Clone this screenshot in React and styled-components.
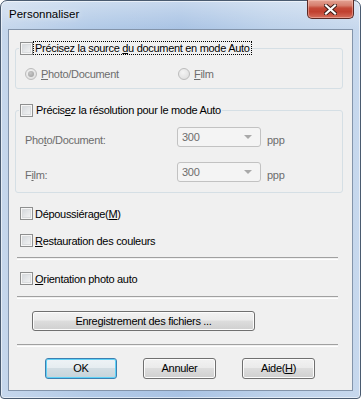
import styled, { createGlobalStyle } from "styled-components";

const GlobalStyle = createGlobalStyle`
  html, body {
    margin: 0;
    padding: 0;
    background: #ffffff;
  }
  body {
    font-family: "Liberation Sans", Arial, sans-serif;
    font-size: 11px;
    letter-spacing: -0.3px;
    color: #000;
  }
`;

const Window = styled.div`
  width: 361px;
  height: 399px;
  box-sizing: border-box;
  display: flex;
  flex-direction: column;
  padding: 0 7px 7px 7px;
  border: 1px solid #4a5b70;
  border-radius: 7px 7px 4px 4px;
  background:
    linear-gradient(180deg, rgba(255, 255, 255, 0.35) 0, rgba(255, 255, 255, 0) 28px),
    linear-gradient(90deg, #c6d7ec 0%, #b2cae7 25%, #a9c3e4 50%, #bcd1ea 75%, #c7d8ed 100%);
  box-shadow: inset 0 0 0 1px rgba(255, 255, 255, 0.55);
`;

const TitleBar = styled.div`
  height: 28px;
  display: flex;
  justify-content: space-between;
  align-items: flex-start;
  margin-right: -1px;
`;

const Title = styled.span`
  font-family: "Liberation Sans", Arial, sans-serif;
  font-size: 11.5px;
  letter-spacing: 0;
  line-height: 14px;
  padding-top: 6px;
  padding-left: 1px;
  color: #000;
  text-shadow: 0 0 6px rgba(255, 255, 255, 0.9);
`;

const CloseButton = styled.div`
  width: 47px;
  height: 19px;
  box-sizing: border-box;
  margin-top: -1px;
  border: 1px solid #5b2a25;
  border-top: none;
  border-radius: 0 0 5px 5px;
  background: linear-gradient(
    180deg,
    #e3a293 0%,
    #d7806f 30%,
    #c44a38 45%,
    #c1402f 65%,
    #d46e5c 100%
  );
  box-shadow: inset 0 0 0 1px rgba(255, 210, 200, 0.45);
  display: flex;
  align-items: center;
  justify-content: center;
`;

const Client = styled.div`
  flex: 1;
  display: flex;
  flex-direction: column;
  background: #f0f0f0;
  border: 1px solid #8394aa;
  padding: 11px 9px 0 6px;
`;

const Group = styled.fieldset`
  margin: ${(p) => p.$top || 0}px 0 0 0;
  padding: 0 0 ${(p) => p.$bottom}px 0;
  min-width: 0;
  border: 1px solid #d5dfe5;
  border-radius: 3px;
`;

const Legend = styled.legend`
  margin-left: 3px;
  padding: 0 1px;
  height: 14px;
`;

const LegendInner = styled.span`
  display: flex;
  align-items: center;
  gap: 1px;
  height: 14px;
`;

const Box = styled.span`
  display: inline-block;
  flex: none;
  width: 13px;
  height: 13px;
  box-sizing: border-box;
  border: 1px solid #8e8f8f;
  background: linear-gradient(135deg, #cfd3d8 0%, #e4e6e8 50%, #f7f7f7 100%);
  box-shadow: inset 0 0 0 1px #f6f6f6, inset 0 0 0 2px #dadcde;
`;

const FocusLabel = styled.span`
  line-height: 12px;
  padding: 0 1px;
  outline: 1px dotted #000;
  outline-offset: 0;
`;

const PlainLabel = styled.span`
  padding-left: 2px;
`;

const Radios = styled.div`
  margin: 12px 0 0 9px;
  display: grid;
  grid-template-columns: 153px auto;
  height: 13px;
`;

const RadioItem = styled.div`
  display: flex;
  align-items: center;
  gap: 4px;
  color: #6d6d6d;
`;

const Radio = styled.span`
  flex: none;
  width: 12px;
  height: 12px;
  box-sizing: border-box;
  border-radius: 50%;
  border: 1px solid #bcbcbc;
  background: radial-gradient(circle at 40% 35%, #f4f4f4 0%, #e2e2e2 70%, #d4d4d4 100%);
  display: flex;
  align-items: center;
  justify-content: center;

  &::after {
    content: "";
    display: ${(p) => (p.$checked ? "block" : "none")};
    width: 6px;
    height: 6px;
    border-radius: 50%;
    background: radial-gradient(circle at 40% 35%, #c8c8c8 0%, #9a9a9a 100%);
  }
`;

const FieldRow = styled.div`
  display: flex;
  align-items: center;
  height: 20px;
  margin: ${(p) => p.$top}px 0 0 9px;
  color: #6d6d6d;
`;

const FieldLabel = styled.span`
  width: 152px;
  flex: none;
  padding-top: 6px;
`;

const Combo = styled.div`
  width: 84px;
  height: 20px;
  box-sizing: border-box;
  border: 1px solid #c2c2c2;
  border-radius: 3px;
  background: #f4f4f4;
  display: flex;
  align-items: center;
  justify-content: space-between;
  padding: 0 8px 0 4px;
  color: #6d6d6d;
`;

const Arrow = styled.span`
  width: 0;
  height: 0;
  border-left: 4px solid transparent;
  border-right: 4px solid transparent;
  border-top: 4px solid #a9a9a9;
`;

const Unit = styled.span`
  margin-left: 6px;
  padding-top: 6px;
`;

const CheckRow = styled.div`
  display: flex;
  align-items: center;
  gap: 2px;
  height: 13px;
  margin: ${(p) => p.$top}px 0 0 5px;
`;

const Separator = styled.div`
  height: 1px;
  margin: ${(p) => p.$top}px 5px 0 2px;
  border-top: 1px solid #a0a0a0;
  border-bottom: 1px solid #ffffff;
`;

const Button = styled.div`
  width: ${(p) => p.$w}px;
  height: ${(p) => p.$h}px;
  box-sizing: border-box;
  border: 1px solid ${(p) => (p.$default ? "#3c7fb1" : "#707070")};
  border-radius: 3px;
  background: ${(p) =>
    p.$default
      ? "linear-gradient(180deg, #eef3f6 0%, #e6edf1 45%, #d2dde3 50%, #c6d3da 100%)"
      : "linear-gradient(180deg, #f2f2f2 0%, #ebebeb 45%, #dddddd 50%, #cfcfcf 100%)"};
  box-shadow: inset 0 0 0 1px ${(p) => (p.$default ? "#5fd2f7" : "#fcfcfc")};
  display: flex;
  align-items: center;
  justify-content: center;
  line-height: 13px;
`;

const SaveRow = styled.div`
  margin: 12px 0 0 17px;
`;

const ButtonRow = styled.div`
  display: flex;
  gap: 26px;
  margin: 11px 0 0 30px;
`;

const CloseIcon = () => (
  <svg width="13" height="11" viewBox="0 0 13 11">
    <path d="M2 1.5 L11 9.5 M11 1.5 L2 9.5" stroke="#3a1a16" strokeWidth="4" strokeLinecap="square" />
    <path d="M2 1.5 L11 9.5 M11 1.5 L2 9.5" stroke="#ffffff" strokeWidth="2.2" strokeLinecap="square" />
  </svg>
);

export default function App() {
  return (
    <>
      <GlobalStyle />
      <Window>
        <TitleBar>
          <Title>Personnaliser</Title>
          <CloseButton>
            <CloseIcon />
          </CloseButton>
        </TitleBar>
        <Client>
          <Group $bottom={8}>
            <Legend>
              <LegendInner>
                <Box />
                <FocusLabel>
                  Précisez la source <u>d</u>u document en mode Auto
                </FocusLabel>
              </LegendInner>
            </Legend>
            <Radios>
              <RadioItem>
                <Radio $checked />
                <span>
                  <u>P</u>hoto/Document
                </span>
              </RadioItem>
              <RadioItem>
                <Radio />
                <span>
                  <u>F</u>ilm
                </span>
              </RadioItem>
            </Radios>
          </Group>

          <Group $top={14} $bottom={10}>
            <Legend>
              <LegendInner>
                <Box />
                <PlainLabel>
                  Précis<u>e</u>z la résolution pour le mode Auto
                </PlainLabel>
              </LegendInner>
            </Legend>
            <FieldRow $top={10}>
              <FieldLabel>
                Pho<u>t</u>o/Document:
              </FieldLabel>
              <Combo>
                300
                <Arrow />
              </Combo>
              <Unit>ppp</Unit>
            </FieldRow>
            <FieldRow $top={15}>
              <FieldLabel>
                F<u>i</u>lm:
              </FieldLabel>
              <Combo>
                300
                <Arrow />
              </Combo>
              <Unit>ppp</Unit>
            </FieldRow>
          </Group>

          <CheckRow $top={14}>
            <Box />
            <span>
              Dépoussiérage(<u>M</u>)
            </span>
          </CheckRow>
          <CheckRow $top={14}>
            <Box />
            <span>
              <u>R</u>estauration des couleurs
            </span>
          </CheckRow>
          <Separator $top={10} />
          <CheckRow $top={12}>
            <Box />
            <span>
              <u>O</u>rientation photo auto
            </span>
          </CheckRow>
          <Separator $top={11} />
          <SaveRow>
            <Button $w={223} $h={20}>
              Enre<u>g</u>istrement des fichiers ...
            </Button>
          </SaveRow>
          <Separator $top={13} />
          <ButtonRow>
            <Button $w={72} $h={21} $default>
              OK
            </Button>
            <Button $w={73} $h={21}>
              Annuler
            </Button>
            <Button $w={73} $h={21}>
              Aide(<u>H</u>)
            </Button>
          </ButtonRow>
        </Client>
      </Window>
    </>
  );
}
